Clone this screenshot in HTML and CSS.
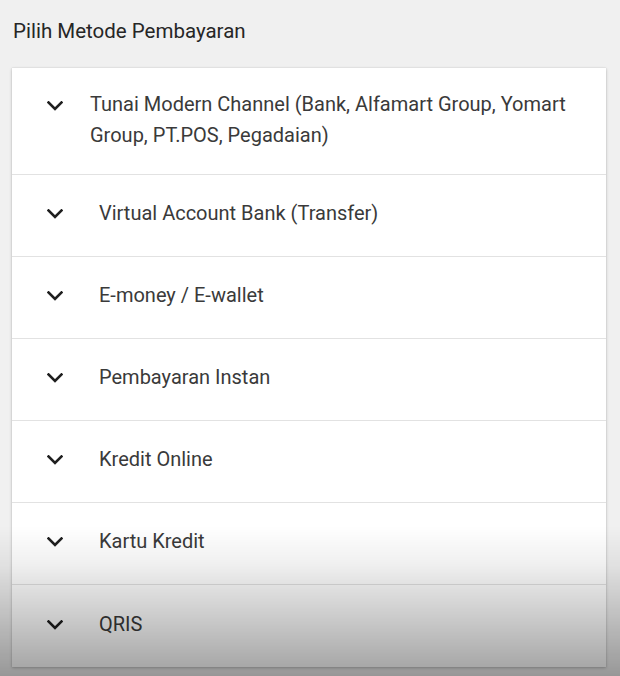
FILE: index.html
```html
<!DOCTYPE html>
<html lang="id">
<head>
<meta charset="utf-8">
<title>Pilih Metode Pembayaran</title>
<link rel="stylesheet" href="styles.css">
</head>
<body>
<div class="page">
  <h1 class="title">Pilih Metode Pembayaran</h1>
  <div class="card">
    <div class="row row-first">
      <svg class="chev" viewBox="0 0 16 10"><path d="M1.5 1.5 L8 8 L14.5 1.5"/></svg>
      <span class="label label-first">Tunai Modern Channel (Bank, Alfamart Group, Yomart Group, PT.POS, Pegadaian)</span>
    </div>
    <div class="row">
      <svg class="chev" viewBox="0 0 16 10"><path d="M1.5 1.5 L8 8 L14.5 1.5"/></svg>
      <span class="label">Virtual Account Bank (Transfer)</span>
    </div>
    <div class="row">
      <svg class="chev" viewBox="0 0 16 10"><path d="M1.5 1.5 L8 8 L14.5 1.5"/></svg>
      <span class="label">E-money / E-wallet</span>
    </div>
    <div class="row">
      <svg class="chev" viewBox="0 0 16 10"><path d="M1.5 1.5 L8 8 L14.5 1.5"/></svg>
      <span class="label">Pembayaran Instan</span>
    </div>
    <div class="row">
      <svg class="chev" viewBox="0 0 16 10"><path d="M1.5 1.5 L8 8 L14.5 1.5"/></svg>
      <span class="label">Kredit Online</span>
    </div>
    <div class="row">
      <svg class="chev" viewBox="0 0 16 10"><path d="M1.5 1.5 L8 8 L14.5 1.5"/></svg>
      <span class="label">Kartu Kredit</span>
    </div>
    <div class="row row-last">
      <svg class="chev" viewBox="0 0 16 10"><path d="M1.5 1.5 L8 8 L14.5 1.5"/></svg>
      <span class="label">QRIS</span>
    </div>
  </div>
</div>
<div class="fade"></div>
</body>
</html>
```

FILE: styles.css
```css
html, body {
  margin: 0;
  padding: 0;
  background: #f0f0f0;
  height: 100%;
  overflow: hidden;
}

.page {
  font-family: Roboto, "Liberation Sans", sans-serif;
  color: #333;
  padding: 0 14px 0 12px;
}

.title {
  margin: 0;
  padding: 18px 0 0 1px;
  height: 68px;
  box-sizing: border-box;
  font-size: 20.5px;
  font-weight: 400;
  line-height: 26px;
  color: #262626;
}

.card {
  background: #fff;
  box-shadow: 0 1px 3px rgba(0, 0, 0, 0.22), 0 0 1px rgba(0, 0, 0, 0.15);
}

.row {
  display: flex;
  align-items: center;
  padding: 23px 20px 27px 35px;
  border-bottom: 1px solid #e2e2e2;
  line-height: 31px;
  font-size: 20px;
}

.row-first {
  align-items: flex-start;
  padding-top: 21px;
  padding-bottom: 23px;
}

.row-last {
  border-bottom: none;
  padding-top: 24px;
  padding-bottom: 27px;
}

.chev {
  width: 16px;
  height: 10px;
  flex: none;
  margin-right: 36px;
}

.row-first .chev {
  margin-top: 12px;
  margin-right: 27px;
}

.chev path {
  fill: none;
  stroke: #1e1e1e;
  stroke-width: 2.6;
  stroke-linecap: square;
}

.label {
  color: #3a3a3a;
}

.fade {
  position: fixed;
  left: 0;
  right: 0;
  bottom: 0;
  height: 150px;
  pointer-events: none;
  background: linear-gradient(to bottom, rgba(0,0,0,0) 0%, rgba(0,0,0,0.06) 25%, rgba(0,0,0,0.2) 60%, rgba(0,0,0,0.37) 100%);
}
```
